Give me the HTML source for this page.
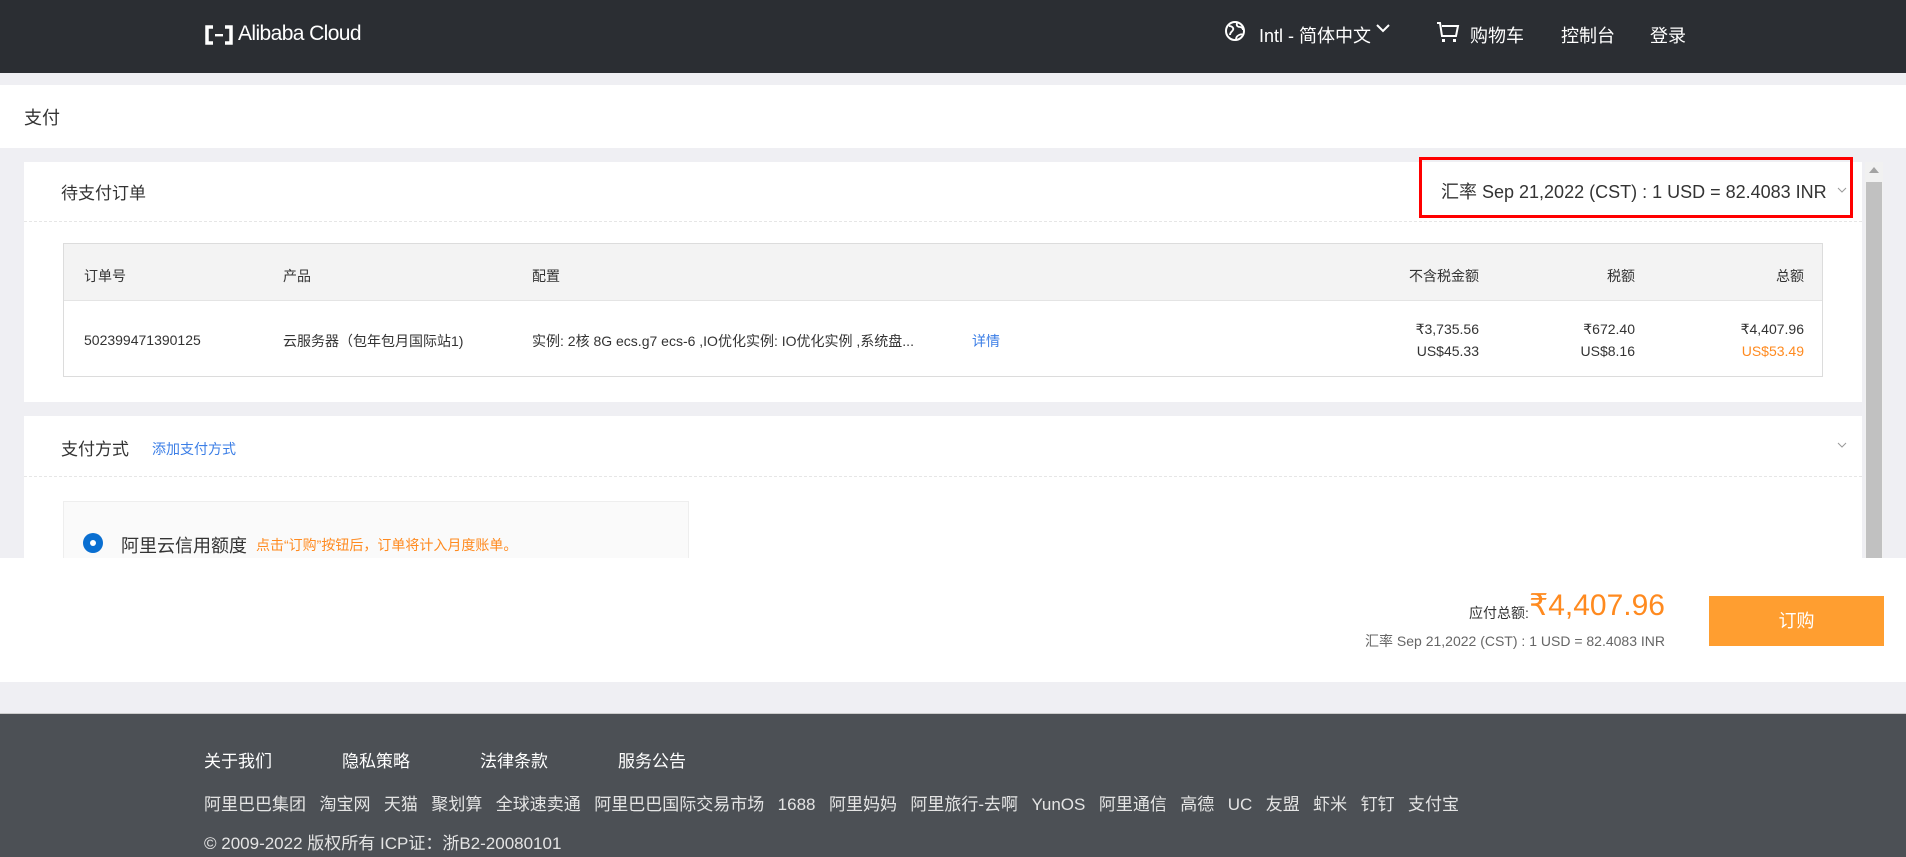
<!DOCTYPE html>
<html><head><meta charset="utf-8">
<style>
*{margin:0;padding:0;box-sizing:border-box}
body{width:1906px;height:857px;overflow:hidden;background:#efeff3;font-family:"Liberation Sans","Noto Sans CJK SC",sans-serif;color:#333;position:relative}
.a{position:absolute;white-space:nowrap}
.hdr{left:0;top:0;width:1906px;height:73px;background:#2b2e33}
.hdr .t{color:#fff;font-size:18px;top:22px}
.white{background:#fff}
.tbl{left:63px;top:243px;width:1760px;height:134px;border:1px solid #dcdcdc;background:#fff}
.th{position:absolute;left:0;top:0;width:100%;height:57px;background:#f3f3f3;border-bottom:1px solid #e4e4e4}
.c{position:absolute;font-size:14px;color:#333;white-space:nowrap}
.r{text-align:right}
.ft{color:#fff;font-size:17px}
</style></head><body>
<div class="a hdr">
 <svg class="a" style="left:204px;top:25px" width="30" height="20" viewBox="0 0 30 20"><path d="M9 2H3v16h6M21 2h6v16h-6" fill="none" stroke="#fff" stroke-width="3.5"/><rect x="11" y="9" width="8" height="2.4" fill="#fff"/></svg>
 <div class="a" style="left:238px;top:22px;color:#fff;font-size:21px;letter-spacing:-0.6px">Alibaba Cloud</div>
 <svg class="a" style="left:1224px;top:20px" width="22" height="22" viewBox="0 0 22 22"><circle cx="11" cy="11" r="9" fill="none" stroke="#fff" stroke-width="2"/><path d="M5 6c3 0 5 2 4 4s-3 2-3 5M13 3c-1 3 1 4 3 4s3 2 3 3M12 20c0-3 1-4 3-5s3-1 4 0" fill="none" stroke="#fff" stroke-width="1.8"/></svg>
 <div class="a t" style="left:1259px">Intl - 简体中文</div>
 <svg class="a" style="left:1376px;top:24px" width="15" height="10"><path d="M1 1l6 6 6-6" fill="none" stroke="#fff" stroke-width="2"/></svg>
 <svg class="a" style="left:1436px;top:20px" width="24" height="24" viewBox="0 0 24 24"><path d="M1 3h3l2 13h14l2-10H6" fill="none" stroke="#fff" stroke-width="2"/><rect x="6" y="19" width="3" height="3" fill="#fff"/><rect x="17" y="19" width="3" height="3" fill="#fff"/></svg>
 <div class="a t" style="left:1470px">购物车</div>
 <div class="a t" style="left:1561px">控制台</div>
 <div class="a t" style="left:1650px">登录</div>
</div>
<div class="a white" style="left:0;top:85px;width:1906px;height:63px"></div>
<div class="a" style="left:24px;top:104px;font-size:18px">支付</div>

<div class="a white" style="left:24px;top:162px;width:1838px;height:240px"></div>
<div class="a" style="left:61px;top:179px;font-size:17px">待支付订单</div>
<div class="a" style="left:24px;top:221px;width:1838px;border-top:1px dashed #e6e6e6"></div>
<div class="a" style="left:1419px;top:157px;width:434px;height:61px;border:3px solid #f00"></div>
<div class="a" style="left:1441px;top:178px;font-size:18px;color:#333">汇率 Sep 21,2022 (CST) : 1 USD = 82.4083 INR</div>
<svg class="a" style="left:1837px;top:187px" width="10" height="7"><path d="M1 1l4 4 4-4" fill="none" stroke="#999" stroke-width="1"/></svg>

<div class="a tbl">
 <div class="th"></div>
 <div class="c" style="left:20px;top:22px">订单号</div>
 <div class="c" style="left:219px;top:22px">产品</div>
 <div class="c" style="left:468px;top:22px">配置</div>
 <div class="c r" style="right:343px;top:22px">不含税金额</div>
 <div class="c r" style="right:187px;top:22px">税额</div>
 <div class="c r" style="right:18px;top:22px">总额</div>
 <div class="c" style="left:20px;top:88px">502399471390125</div>
 <div class="c" style="left:219px;top:87px">云服务器（包年包月国际站1)</div>
 <div class="c" style="left:468px;top:87px">实例: 2核 8G ecs.g7 ecs-6 ,IO优化实例: IO优化实例 ,系统盘...</div>
 <div class="c" style="left:908px;top:87px;color:#3b7ee6">详情</div>
 <div class="c r" style="right:343px;top:74px;line-height:22px">₹3,735.56<br>US$45.33</div>
 <div class="c r" style="right:187px;top:74px;line-height:22px">₹672.40<br>US$8.16</div>
 <div class="c r" style="right:18px;top:74px;line-height:22px">₹4,407.96<br><span style="color:#ff8a1f">US$53.49</span></div>
</div>

<div class="a" style="left:1865px;top:162px;width:18px;height:396px;background:#f1f1f1"></div>
<div class="a" style="left:1866px;top:182px;width:16px;height:376px;background:#c1c1c1"></div>
<svg class="a" style="left:1869px;top:167px" width="10" height="6"><path d="M0 6L5 0 10 6z" fill="#a3a3a3"/></svg>

<div class="a white" style="left:24px;top:416px;width:1838px;height:142px"></div>
<div class="a" style="left:61px;top:435px;font-size:17px">支付方式</div>
<div class="a" style="left:152px;top:439px;font-size:14px;color:#3b7ee6">添加支付方式</div>
<svg class="a" style="left:1837px;top:442px" width="10" height="7"><path d="M1 1l4 4 4-4" fill="none" stroke="#999" stroke-width="1"/></svg>
<div class="a" style="left:24px;top:476px;width:1838px;border-top:1px dashed #e6e6e6"></div>
<div class="a" style="left:63px;top:501px;width:626px;height:60px;border:1px solid #eee;background:#fafafa"></div>
<div class="a" style="left:83px;top:533px;width:20px;height:20px;border-radius:50%;background:#0a6fd1"></div>
<div class="a" style="left:90px;top:540px;width:6px;height:6px;border-radius:50%;background:#fff"></div>
<div class="a" style="left:121px;top:532px;font-size:18px;color:#333">阿里云信用额度</div>
<div class="a" style="left:256px;top:535px;font-size:14px;color:#ff8a1f">点击“订购”按钮后，订单将计入月度账单。</div>

<div class="a white" style="left:0;top:558px;width:1906px;height:124px"></div>
<div class="a" style="left:1469px;top:603px;font-size:14px">应付总额:</div>
<div class="a r" style="right:241px;top:588px;font-size:30px;color:#ff8a1f">₹4,407.96</div>
<div class="a r" style="right:241px;top:631px;font-size:14px;color:#666">汇率 Sep 21,2022 (CST) : 1 USD = 82.4083 INR</div>
<div class="a" style="left:1709px;top:596px;width:175px;height:50px;background:#ff9e30;color:#fff;font-size:18px;text-align:center;line-height:50px">订购</div>

<div class="a" style="left:0;top:713px;width:1906px;height:144px;background:#4c5055;border-top:1px solid #ccc"></div>
<div class="a ft" style="left:204px;top:747px">关于我们</div>
<div class="a ft" style="left:342px;top:747px">隐私策略</div>
<div class="a ft" style="left:480px;top:747px">法律条款</div>
<div class="a ft" style="left:618px;top:747px">服务公告</div>
<div class="a" style="left:204px;top:790px;font-size:17px;color:#e4e4e4;word-spacing:2px">阿里巴巴集团&nbsp; 淘宝网&nbsp; 天猫&nbsp; 聚划算&nbsp; 全球速卖通&nbsp; 阿里巴巴国际交易市场&nbsp; 1688&nbsp; 阿里妈妈&nbsp; 阿里旅行-去啊&nbsp; YunOS&nbsp; 阿里通信&nbsp; 高德&nbsp; UC&nbsp; 友盟&nbsp; 虾米&nbsp; 钉钉&nbsp; 支付宝</div>
<div class="a" style="left:204px;top:829px;font-size:17px;color:#e4e4e4">© 2009-2022 版权所有 ICP证：浙B2-20080101</div>
</body></html>
